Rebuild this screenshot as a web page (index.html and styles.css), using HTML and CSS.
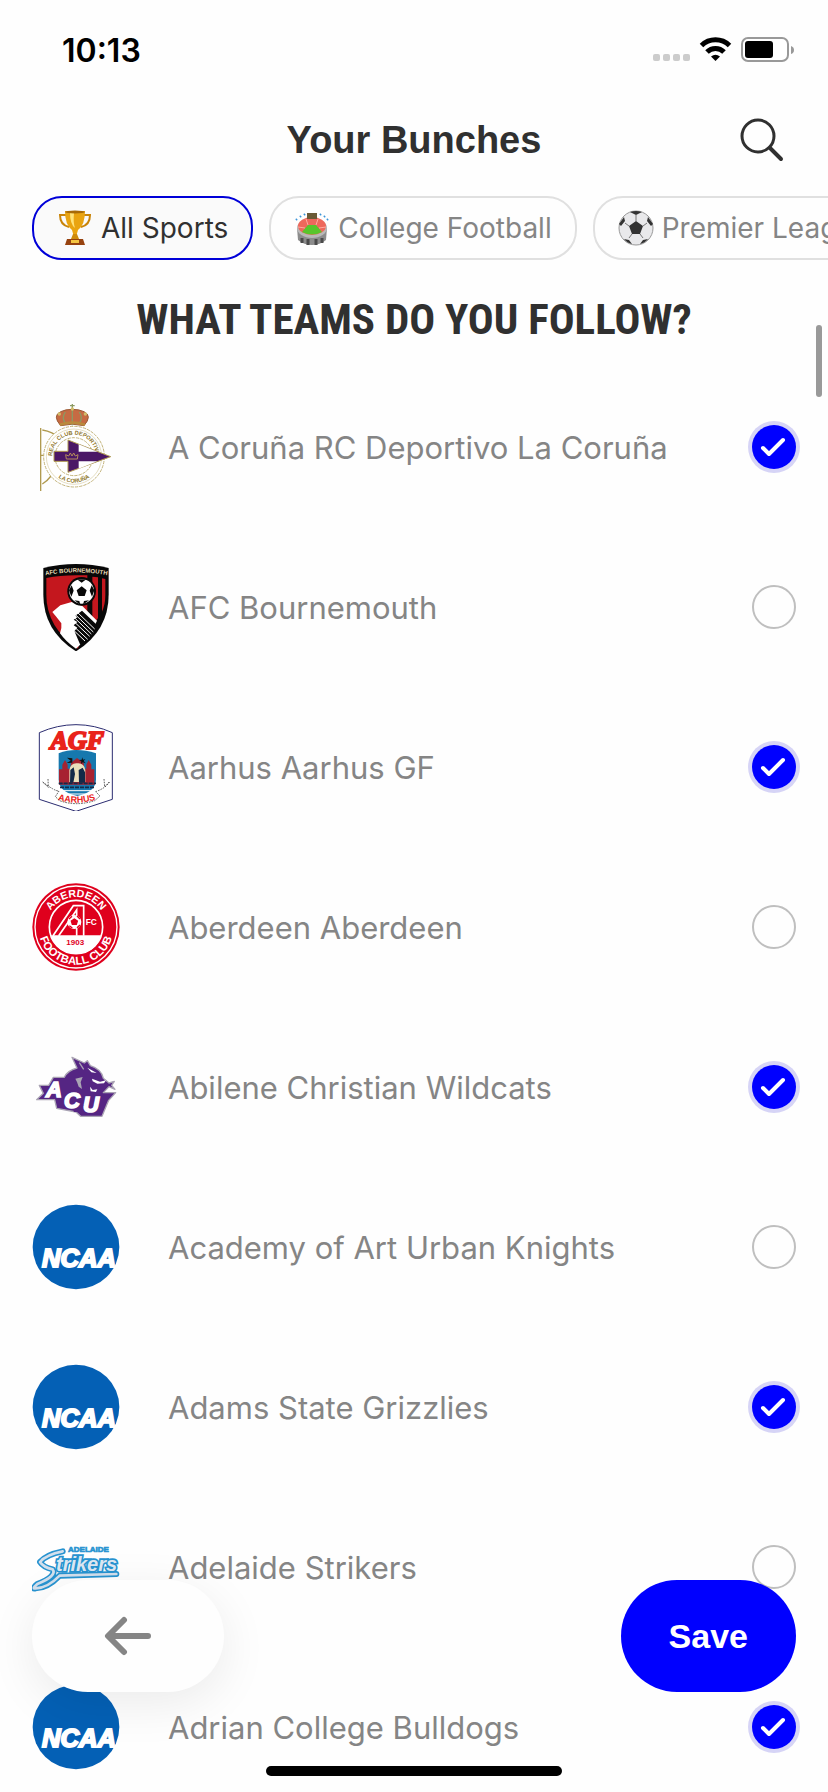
FILE: index.html
```html
<!DOCTYPE html>
<html lang="en">
<head>
    <meta charset="UTF-8">
    <meta name="viewport" content="width=device-width, initial-scale=1.0">
    <title>Your Bunches</title>
    <link rel="stylesheet" href="styles.css">
</head>
<body>

    <!-- Shared shapes -->
    <svg class="defs" aria-hidden="true">
        <symbol id="ncaa" viewBox="36 41 264 264">
            <ellipse cx="168" cy="173" rx="130" ry="127" fill="#0460b5"/>
            <text x="66" y="232" font-family="Liberation Sans" font-size="77" font-weight="bold" font-style="italic" fill="#fff" stroke="#fff" stroke-width="6">NCAA</text>
        </symbol>
        <symbol id="tick" viewBox="0 0 44 44">
            <path d="M11 23l6 6 14-14" fill="none" stroke="#fff" stroke-width="4" stroke-linecap="round" stroke-linejoin="round"/>
        </symbol>
        <symbol id="ball" viewBox="0 0 36 36">
            <circle cx="18" cy="18" r="17" fill="#e9e9eb" stroke="#999" stroke-width="1"/>
            <path d="M18 11l7 5-3 8h-8l-3-8zM12 2q6-2 12 0l-6 3zM1 14l5-7 1 4-4 5zM35 14l-5-7-1 4 4 5zM6 29l5 1 3 4q-5-1-8-5zM30 29l-5 1-3 4q5-1 8-5z" fill="#333"/>
            <path d="M18 5v6M25 16l4-3M22 24l3 4M14 24l-3 4M11 16l-4-3" fill="none" stroke="#777" stroke-width="1"/>
        </symbol>
    </svg>

    <div class="app">
        <div class="status-bar">
            <span class="time">10:13</span>
            <svg class="status-icons" width="144" height="26" viewBox="0 0 144 26" aria-hidden="true">
                <g fill="#ccc">
                    <rect x="1" y="17" width="7" height="7" rx="2"/>
                    <rect x="11" y="17" width="7" height="7" rx="2"/>
                    <rect x="21" y="17" width="7" height="7" rx="2"/>
                    <rect x="31" y="17" width="7" height="7" rx="2"/>
                </g>
                <g fill="none" stroke="#000" stroke-width="5">
                    <path d="M49.500 8.500a20 20 0 0 1 28 0"/>
                    <path d="M55 15a12 12 0 0 1 17 0"/>
                </g>
                <path d="M59 19.500q4.500-3.500 9 0L63.500 24z"/>
                <rect x="90" y="1" width="46" height="23" rx="6" fill="#fff" stroke="#999" stroke-width="2"/>
                <rect x="93" y="4" width="28" height="17" rx="3"/>
                <path d="M139 9q3 1 3 4t-3 4z" fill="#999"/>
            </svg>
        </div>

        <header class="header">
            <h1>Your Bunches</h1>
            <button class="search" aria-label="Search">
                <svg width="44" height="44" viewBox="0 0 44 44" fill="none" stroke="#303030" stroke-linecap="round">
                    <circle cx="18" cy="18" r="16" stroke-width="3"/>
                    <path d="M30 30l11 11" stroke-width="4"/>
                </svg>
            </button>
        </header>

        <nav class="chips">
            <button class="chip active">
                <svg width="36" height="36" viewBox="0 0 36 36">
                    <path d="M9 5H3q0 10 9 12M27 5h6q0 10-9 12" fill="none" stroke="#c98408" stroke-width="2"/>
                    <path d="M8 1h20q0 14-7 19l-2 7h-2l-2-7Q8 15 8 1z" fill="#e9a411"/>
                    <path d="M13 3h4q-1 10 1 15-5-4-5-15z" fill="#ffe37a"/>
                    <ellipse cx="18" cy="2" rx="10" ry="1.500" fill="#a76a08"/>
                    <path d="M16 24h4l2 5h-8z" fill="#cf8b0d"/>
                    <path d="M10 29h16l2 6H8z" fill="#96420f"/>
                    <path d="M14 30h8v3h-8z" fill="#f4c542"/>
                </svg>
                All Sports
            </button>
            <button class="chip">
                <svg width="36" height="36" viewBox="0 0 36 36">
                    <path d="M3 18h30l-1 12q-6 5-14 5T4 30z" fill="#8c8c8c"/>
                    <path d="M8 28v5M14 29v6M22 29v6M28 28v5" stroke="#4a4a4a" stroke-width="3"/>
                    <ellipse cx="18" cy="18" rx="15" ry="10" fill="#b8b8b8"/>
                    <ellipse cx="18" cy="16" rx="14" ry="9" fill="#ee685c"/>
                    <path d="M8 22l6-7h8l6 7q-10 5-20 0z" fill="#58c52c"/>
                    <path d="M12 9l2 6M24 9l-2 6M4 17l7 1M32 17l-7 1" stroke="#ffaaa0" stroke-width="1"/>
                    <rect x="13" y="3" width="10" height="6" fill="#6a5a36"/>
                    <path d="M2 10l1-1M6 7l1-1M10 5l1-1M26 5l1-1M30 7l1-1M33 10l1-1" stroke="#3a94d8" stroke-width="2"/>
                </svg>
                College Football
            </button>
            <button class="chip">
                <svg width="36" height="36"><use href="#ball"/></svg>
                Premier League
            </button>
        </nav>

        <h2>WHAT TEAMS DO YOU FOLLOW?</h2>

        <main class="teams">
            <label class="team">
                <svg class="logo" viewBox="36 39 264 264">
                    <path d="M62 114v190M67 120q32 5 50 24M67 282q14-8 26-24M62 196h40" fill="none" stroke="#b09a50" stroke-width="4"/>
                    <circle cx="162" cy="200" r="91" fill="#fff" stroke="#c4b57d" stroke-width="3" stroke-dasharray="10 3"/>
                    <circle cx="162" cy="200" r="83" fill="none" stroke="#d8cda5" stroke-width="2"/>
                    <circle cx="162" cy="200" r="57" fill="none" stroke="#c4b57d" stroke-width="3" stroke-dasharray="10 3"/>
                    <path id="depor-top" d="M96 200a66 66 0 0 1 132 0" fill="none"/>
                    <path id="depor-bottom" d="M84 200a78 78 0 0 0 156 0" fill="none"/>
                    <g font-family="Liberation Sans" font-weight="bold" font-size="17" fill="#8f762a">
                        <text><textPath href="#depor-top" startOffset="50%" text-anchor="middle">REAL CLUB DEPORTIVO</textPath></text>
                        <text><textPath href="#depor-bottom" startOffset="50%" text-anchor="middle">LA CORUÑA</textPath></text>
                    </g>
                    <path d="M102 184h42v-34l128 50-128 47v-33h-42z" fill="#4b1766" stroke="#b09a50" stroke-width="3"/>
                    <path d="M176 163l56 22h-56zM176 214h56l-56 22z" fill="#fff"/>
                    <path d="M139 207l-2-13 9 4 5-9 5 9 5-9 5 9 8-4-2 13z" fill="none" stroke="#b58b5c" stroke-width="3"/>
                    <path d="M122 107q-26-30 0-42 14-7 35-7t35 7q26 12 0 42-35-9-70 0z" fill="#c66b43" stroke="#9a5a35" stroke-width="3"/>
                    <path d="M157 42v64M150 47h14M136 66q-12 18 0 34M178 66q12 18 0 34" fill="none" stroke="#8b9a63" stroke-width="4"/>
                    <path d="M119 104q38-12 76 0" fill="none" stroke="#b98a3c" stroke-width="8"/>
                    <g fill="#d2bd6b"><circle cx="118" cy="72" r="5"/><circle cx="196" cy="72" r="5"/><circle cx="157" cy="57" r="5"/></g>
                </svg>
                <span class="name">A Coruña RC Deportivo La Coruña</span>
                <span class="check"><input type="checkbox" checked><svg><use href="#tick"/></svg></span>
            </label>

            <label class="team">
                <svg class="logo" viewBox="36 39 264 264">
                    <path d="M70 54q98-24 196 0v80q0 108-98 170-98-62-98-170z" fill="#080808"/>
                    <path d="M79 84q40-8 89-8h34v110l-28 110Q79 232 79 134z" fill="#c4171e"/>
                    <path d="M217 80l17 2v122l-17 27zM246 85l10 2v48q0 28-10 50z" fill="#c4171e"/>
                    <path d="M97 186l24-20 34-10 32 12 44 44q-16 42-63 84-30-20-48-46 6-14 4-30l-14-18z" fill="#fff"/>
                    <path d="M166 197l20-15 45 43q-14 36-50 60l-18-42 9-10-11-7 11-10-11-7 11-7z" fill="#080808"/>
                    <path d="M170 185l54 52M163 191l57 55M158 198l56 54M160 213l49 46M158 226l45 42M159 239l36 34" stroke="#fff" stroke-width="3"/>
                    <circle cx="185" cy="124" r="43" fill="#080808"/>
                    <circle cx="185" cy="124" r="37" fill="#fff"/>
                    <path d="M185 109l15 12-6 17h-18l-6-17zM171 88h28l-14 10zM147 121l8-15 6 16-7 18zM223 121l-8-15-6 16 7 18zM163 151l15 2 3 11zM207 151l-15 2-3 11z" fill="#080808"/>
                    <path id="afcb" d="M74 76q94-18 190 0" fill="none"/>
                    <text font-family="Liberation Sans" font-weight="bold" font-size="18" fill="#e8dcb8"><textPath href="#afcb" startOffset="50%" text-anchor="middle">AFC BOURNEMOUTH</textPath></text>
                </svg>
                <span class="name">AFC Bournemouth</span>
                <span class="check"><input type="checkbox"><svg><use href="#tick"/></svg></span>
            </label>

            <label class="team">
                <svg class="logo" viewBox="36 39 264 264">
                    <path d="M58 68q54-24 110-24t109 24v200l-109 36-110-36z" fill="#fff" stroke="#2b2c70" stroke-width="3"/>
                    <path d="M116 130q50-20 112 0v78q0 38-56 50-56-12-56-50z" fill="#1678ae"/>
                    <path d="M117 178h10v-14l8-14 8 14v12h8l2-18 18-14 20 14 2 18h6v-12l7-14 8 14v14h9v46H117z" fill="#a72231"/>
                    <path d="M148 180q4-22 24-20 20-2 24 20v36h-48z" fill="#eadfbb"/>
                    <path d="M151 180l10-8 4 20-5 26h-10zM176 180l12-7 7 14v31h-18z" fill="#122a48"/>
                    <path d="M116 220h112M120 232h104" stroke="#122a48" stroke-width="5" stroke-dasharray="12 3"/>
                    <path d="M124 242h96M137 252h68" stroke="#fff" stroke-width="3"/>
                    <path d="M141 143l11 9-12 7 17-1 0-13zM187 142l2 7 7-2-5 6 6 7-9-3-5 5 1-8-7-4 8-1z" fill="#111"/>
                    <text x="172" y="117" text-anchor="middle" font-family="Liberation Serif" font-weight="bold" font-style="italic" font-size="78" fill="#e9231b" stroke="#e9231b" stroke-width="6">AGF</text>
                    <path d="M68 216q37 28 49 27l-11 17 13 12q49 18 105 0l16-14-13-13q29-10 41-29M84 207l1 25-17-16M252 207l2 24 14-15" fill="none" stroke="#111" stroke-width="2" stroke-dasharray="5 3"/>
                    <path id="agf" d="M108 268q58 20 124 0" fill="none"/>
                    <text font-family="Liberation Sans" font-weight="bold" font-size="27" fill="#e9231b"><textPath href="#agf" startOffset="50%" text-anchor="middle">AARHUS</textPath></text>
                </svg>
                <span class="name">Aarhus Aarhus GF</span>
                <span class="check"><input type="checkbox" checked><svg><use href="#tick"/></svg></span>
            </label>

            <label class="team">
                <svg class="logo" viewBox="36 41 264 264">
                    <circle cx="168" cy="173" r="131" fill="#df001d"/>
                    <circle cx="168" cy="173" r="123" fill="none" stroke="#fff" stroke-width="4"/>
                    <circle cx="168" cy="173" r="80" fill="none" stroke="#fff" stroke-width="5"/>
                    <path d="M93 198h150q-14 54-75 54t-75-54z" fill="#fff"/>
                    <path d="M99 199l61-90h31v90M116 199l54-77v77" fill="none" stroke="#fff" stroke-width="5"/>
                    <circle cx="163" cy="158" r="21" fill="#fff"/>
                    <path d="M163 149l9 6-3 10h-12l-3-10zM147 149l9-8M171 140l9 9M148 169l9 7M171 175l9-8" fill="#df001d" stroke="#df001d" stroke-width="4"/>
                    <path id="abd-top" d="M78 173a90 90 0 0 1 180 0" fill="none"/>
                    <path id="abd-bottom" d="M55 173a113 113 0 0 0 226 0" fill="none"/>
                    <g font-family="Liberation Sans" font-weight="bold" fill="#fff">
                        <text font-size="32"><textPath href="#abd-top" startOffset="50%" text-anchor="middle">ABERDEEN</textPath></text>
                        <text font-size="34"><textPath href="#abd-bottom" startOffset="50%" text-anchor="middle">FOOTBALL CLUB</textPath></text>
                        <text x="197" y="166" font-size="25">FC</text>
                        <text x="139" y="227" font-size="24" fill="#df001d">1903</text>
                    </g>
                </svg>
                <span class="name">Aberdeen Aberdeen</span>
                <span class="check"><input type="checkbox"><svg><use href="#tick"/></svg></span>
            </label>

            <label class="team">
                <svg class="logo" viewBox="36 41 264 264">
                    <path d="M50 211l20-19-12-24h28l14-24h33q9-20 38-28l-15-32 37 17 9-7 9 15q34 11 39 38l17 14 16-5-8 12 10 12-18-8-17 18h37l-21 23-20 48h-64l-14-13-58-11-6-26z" fill="#552583" stroke="#aaa4b4" stroke-width="4" stroke-linejoin="round"/>
                    <path d="M166 148l22-5-6 16 4 20-10-7-5-14z" fill="#aaa4b4"/>
                    <path d="M202 115l28 16-16-2zM216 148l24 9 18-4-6 9-20 1-14-7zM210 172l8 10 14-2-4 8-16-2z" fill="#fff"/>
                    <path d="M178 100l13 20" stroke="#aaa4b4" stroke-width="4"/>
                    <g font-family="Liberation Sans" font-weight="bold" font-style="italic" fill="#fff" stroke="#fff" stroke-width="5">
                        <text x="78" y="203" font-size="66">A</text>
                        <text x="132" y="235" font-size="66">C</text>
                        <text x="189" y="248" font-size="66">U</text>
                    </g>
                    <path d="M161 242h12v6h-12z" fill="#552583"/>
                </svg>
                <span class="name">Abilene Christian Wildcats</span>
                <span class="check"><input type="checkbox" checked><svg><use href="#tick"/></svg></span>
            </label>

            <label class="team">
                <svg class="logo"><use href="#ncaa"/></svg>
                <span class="name">Academy of Art Urban Knights</span>
                <span class="check"><input type="checkbox"><svg><use href="#tick"/></svg></span>
            </label>

            <label class="team">
                <svg class="logo"><use href="#ncaa"/></svg>
                <span class="name">Adams State Grizzlies</span>
                <span class="check"><input type="checkbox" checked><svg><use href="#tick"/></svg></span>
            </label>

            <label class="team">
                <svg class="logo" viewBox="96 9 264 264">
                    <text x="204" y="96" font-family="Liberation Sans" font-size="24" font-weight="bold" fill="#2793d0" stroke="#2793d0" stroke-width="2">ADELAIDE</text>
                    <!-- swoosh under the wordmark -->
                    <g fill="none" stroke-linecap="round" stroke-linejoin="round">
                        <path d="M188 94q-50 10-68 32 10 16 38 22 14 20-46 44-18 16-5 13 35 0 72-38l170-5" stroke="#2793d0" stroke-width="18"/>
                        <path d="M188 94q-50 10-68 32 10 16 38 22 14 20-46 44-18 16-5 13 35 0 72-38l170-5" stroke="#d3dfec" stroke-width="8"/>
                    </g>
                    <text x="168" y="153" font-family="Liberation Sans" font-size="60" font-weight="bold" font-style="italic" fill="#dde7f2" stroke="#2793d0" stroke-width="10" paint-order="stroke">trikers</text>
                </svg>
                <span class="name">Adelaide Strikers</span>
                <span class="check"><input type="checkbox"><svg><use href="#tick"/></svg></span>
            </label>

            <label class="team">
                <svg class="logo"><use href="#ncaa"/></svg>
                <span class="name">Adrian College Bulldogs</span>
                <span class="check"><input type="checkbox" checked><svg><use href="#tick"/></svg></span>
            </label>
        </main>

        <div class="scroll-thumb"></div>

        <div class="actions">
            <button class="back" aria-label="Back">
                <svg width="48" height="40" viewBox="0 0 48 40" fill="none" stroke="#858585" stroke-width="6" stroke-linecap="round" stroke-linejoin="round">
                    <path d="M20 4L4 20l16 16M5 20h39"/>
                </svg>
            </button>
            <button class="save">Save</button>
        </div>
        <div class="home-bar"></div>
    </div>

</body>
</html>
```
FILE: styles.css
```css
* {
    box-sizing: border-box;
}

body {
    font-family: Inter, sans-serif;
    background-color: #fefefe;
    color: #303030;
    margin: 0;
}

button {
    font-family: inherit;
    border: none;
    background: none;
    padding: 0;
    cursor: pointer;
}

.defs {
    display: none;
}

.app {
    position: relative;
    display: flex;
    flex-direction: column;
    height: 100vh;
    overflow: hidden;
}

.status-bar {
    display: flex;
    justify-content: space-between;
    align-items: center;
    height: 100px;
    padding: 0 32px 0 62px;
    flex-shrink: 0;
}

.time {
    color: #000;
    font-size: 32px;
    font-weight: 600;
}

.header {
    display: grid;
    grid-template-columns: 44px 1fr 44px;
    align-items: center;
    height: 80px;
    padding: 0 44px;
    flex-shrink: 0;
}

h1 {
    grid-column: 2;
    margin: 0;
    font-family: "Liberation Sans", sans-serif;
    font-size: 38px;
    line-height: 44px;
    font-weight: bold;
    text-align: center;
}

.search {
    height: 44px;
}

.chips {
    display: flex;
    gap: 16px;
    padding: 16px 32px 0;
    overflow: hidden;
    flex-shrink: 0;
}

.chip {
    display: flex;
    align-items: center;
    gap: 8px;
    flex-shrink: 0;
    height: 64px;
    padding: 0 23px;
    border: 2px solid #e0e0e0;
    border-radius: 30px;
    color: #858585;
    font-size: 28px;
    white-space: nowrap;
}

.chip.active {
    border-color: #0000d8;
    background-color: #fafafa;
    color: #303030;
}

h2 {
    margin: 32px 0 20px;
    font-family: "Roboto Condensed", Roboto, sans-serif;
    font-size: 43px;
    line-height: 55px;
    font-weight: bold;
    text-align: center;
    flex-shrink: 0;
}

.teams {
    flex: 1;
    min-height: 0;
    overflow-y: auto;
    scrollbar-width: none;
}

.team {
    display: flex;
    align-items: center;
    height: 160px;
    padding: 0 32px;
}

.logo {
    width: 88px;
    height: 88px;
    margin-right: 48px;
    flex-shrink: 0;
}

.name {
    flex: 1;
    color: #858585;
    font-size: 31px;
}

.check {
    display: grid;
    width: 44px;
    height: 44px;
}

.check input,
.check svg {
    grid-area: 1 / 1;
    width: 44px;
    height: 44px;
    margin: 0;
}

.check input {
    appearance: none;
    border: 2px solid #bfbfbf;
    border-radius: 50%;
}

.check svg {
    visibility: hidden;
    pointer-events: none;
}

.check input:checked {
    border: none;
    background-color: #0000ff;
    box-shadow: 0 0 0 4px #d6d4f6;
}

.check input:checked + svg {
    visibility: visible;
}

.scroll-thumb {
    position: absolute;
    top: 325px;
    right: 6px;
    width: 6px;
    height: 72px;
    border-radius: 3px;
    background-color: #999;
}

.actions {
    position: absolute;
    left: 32px;
    right: 32px;
    bottom: 100px;
    display: flex;
    justify-content: space-between;
}

.back,
.save {
    height: 112px;
    border-radius: 56px;
}

.back {
    display: flex;
    align-items: center;
    justify-content: center;
    width: 192px;
    background-color: #fefefe;
    box-shadow: 0 12px 48px rgba(0, 0, 0, 0.08);
}

.save {
    padding: 0 48px;
    background-color: #0000ff;
    color: #fff;
    font-family: "Liberation Sans", sans-serif;
    font-size: 34px;
    font-weight: bold;
}

.home-bar {
    position: absolute;
    left: 0;
    right: 0;
    bottom: 16px;
    width: 296px;
    height: 10px;
    margin: 0 auto;
    border-radius: 5px;
    background-color: #000;
}
```
